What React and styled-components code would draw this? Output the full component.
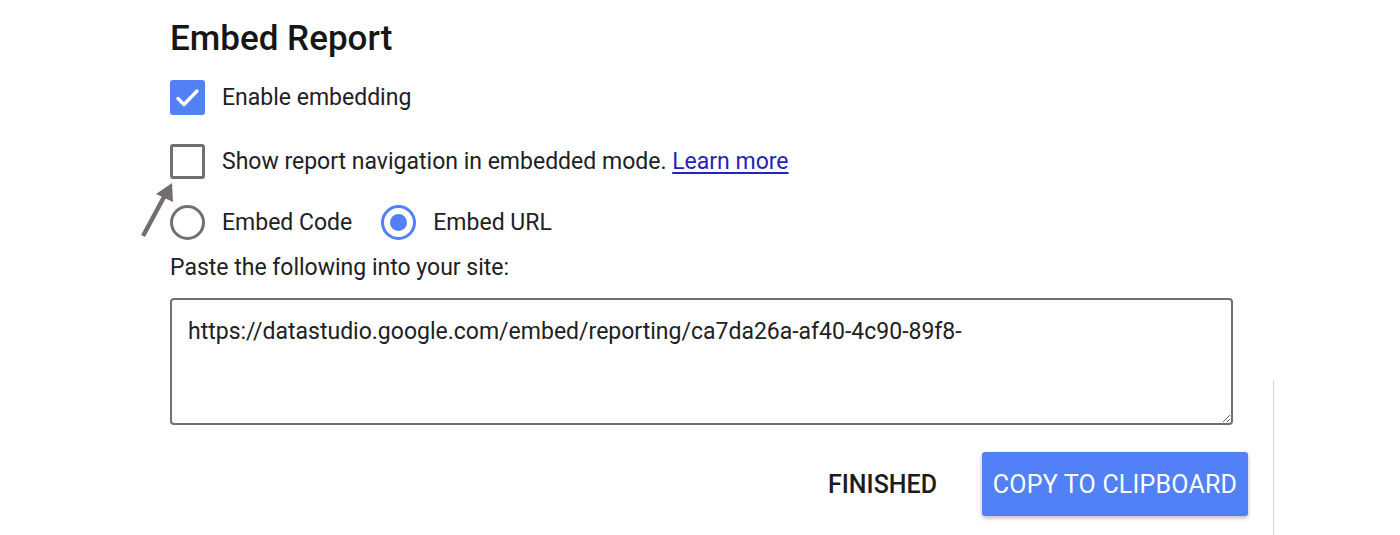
import React from 'react';
import styled, { createGlobalStyle } from 'styled-components';

const GlobalStyle = createGlobalStyle`
  html, body {
    margin: 0;
    padding: 0;
    background: #ffffff;
  }
  body {
    font-family: Roboto, "Liberation Sans", sans-serif;
    color: #202124;
  }
`;

const BLUE = '#5280f6';
const GREY = '#756e6e';

const App = () => {
    return (
        <Page>
            <GlobalStyle />
            <Dialog>
                <Title>Embed Report</Title>

                <Options>
                    <OptionRow $top={80}>
                        <CheckBox $checked>
                            <svg width="35" height="35" viewBox="0 0 35 35">
                                <path d="M8 18.5 L14 24.5 L27 11" fill="none" stroke="#fff" strokeWidth="3.4" strokeLinecap="round" strokeLinejoin="round" />
                            </svg>
                        </CheckBox>
                        <Label>Enable embedding</Label>
                    </OptionRow>

                    <OptionRow $top={29}>
                        <CheckBox />
                        <Label>
                            Show report navigation in embedded mode. <LearnMore href="#">Learn more</LearnMore>
                        </Label>
                    </OptionRow>

                    <OptionRow $top={26}>
                        <Radio />
                        <Label>Embed Code</Label>
                        <Radio $checked $gap={29} />
                        <Label>Embed URL</Label>
                    </OptionRow>

                    {/* pointer arrow drawn over the page */}
                    <Arrow width="40" height="62" viewBox="0 0 40 62">
                        <line x1="3" y1="56" x2="24" y2="17" stroke={GREY} strokeWidth="4.5" />
                        <polygon points="32,3 33,22 16,14" fill={GREY} />
                    </Arrow>
                </Options>

                <Hint>Paste the following into your site:</Hint>

                <CodeBox readOnly defaultValue="https://datastudio.google.com/embed/reporting/ca7da26a-af40-4c90-89f8-" />

                <Actions>
                    <TextButton>FINISHED</TextButton>
                    <PrimaryButton>COPY TO CLIPBOARD</PrimaryButton>
                </Actions>
            </Dialog>
            <Edge />
        </Page>
    );
};

export default App;

const Page = styled.div`
  display: flex;
  height: 535px;
  overflow: hidden;
`;

const Dialog = styled.div`
  width: 1078px;
  padding-left: 170px;
  display: flex;
  flex-direction: column;
`;

const Edge = styled.div`
  margin-top: 380px;
  margin-left: 25px;
  border-left: 1px solid #d3d6e0;
`;

const Title = styled.h1`
  margin: 19px 0 0;
  font-size: 35px;
  line-height: 40px;
  font-weight: 500;
  color: #161616;
`;

const Options = styled.div`
  position: relative;
  margin-top: -59px;
  display: flex;
  flex-direction: column;
`;

const OptionRow = styled.div`
  display: flex;
  align-items: center;
  height: 35px;
  margin-top: ${p => p.$top}px;
`;

const CheckBox = styled.span`
  width: 35px;
  height: 35px;
  box-sizing: border-box;
  border-radius: 3px;
  flex-shrink: 0;
  display: flex;
  background: ${p => (p.$checked ? BLUE : '#fff')};
  border: ${p => (p.$checked ? 'none' : `3px solid ${GREY}`)};
`;

const Radio = styled.span`
  width: 35px;
  height: 35px;
  box-sizing: border-box;
  border-radius: 50%;
  flex-shrink: 0;
  margin-left: ${p => p.$gap || 0}px;
  border: 3px solid ${p => (p.$checked ? BLUE : GREY)};
  display: flex;
  align-items: center;
  justify-content: center;

  &::after {
    content: '';
    width: 17px;
    height: 17px;
    border-radius: 50%;
    background: ${p => (p.$checked ? BLUE : 'transparent')};
  }
`;

const Label = styled.span`
  margin-left: 17px;
  font-size: 23px;
  color: #202124;
  white-space: nowrap;
`;

const LearnMore = styled.a`
  color: #2424b8;
  text-decoration: underline;
  text-underline-offset: 3px;
`;

const Arrow = styled.svg`
  position: absolute;
  left: -30px;
  top: 180px;
`;

const Hint = styled.div`
  margin-top: 14px;
  font-size: 23px;
  line-height: 28px;
  color: #202124;
`;

const CodeBox = styled.textarea`
  margin-top: 16px;
  width: 1063px;
  height: 127px;
  box-sizing: border-box;
  border: 2px solid ${GREY};
  border-radius: 4px;
  padding: 18px 16px 16px;
  font-family: Roboto, "Liberation Sans", sans-serif;
  font-size: 23px;
  color: #202124;
  resize: vertical;
  outline: none;
`;

const Actions = styled.div`
  margin-top: 27px;
  display: flex;
  justify-content: flex-end;
  align-items: center;
  gap: 30px;
`;

const TextButton = styled.button`
  border: none;
  background: transparent;
  font-family: Roboto, "Liberation Sans", sans-serif;
  font-size: 25px;
  font-weight: 500;
  color: #1c1c1c;
  padding: 0 15px;
  height: 64px;
  cursor: pointer;
`;

const PrimaryButton = styled.button`
  border: none;
  background: ${BLUE};
  color: #fff;
  font-family: Roboto, "Liberation Sans", sans-serif;
  font-size: 25px;
  font-weight: 400;
  letter-spacing: 0.2px;
  height: 64px;
  width: 266px;
  border-radius: 3px;
  box-shadow: 0 2px 4px rgba(0, 0, 0, 0.28);
  cursor: pointer;
`;
